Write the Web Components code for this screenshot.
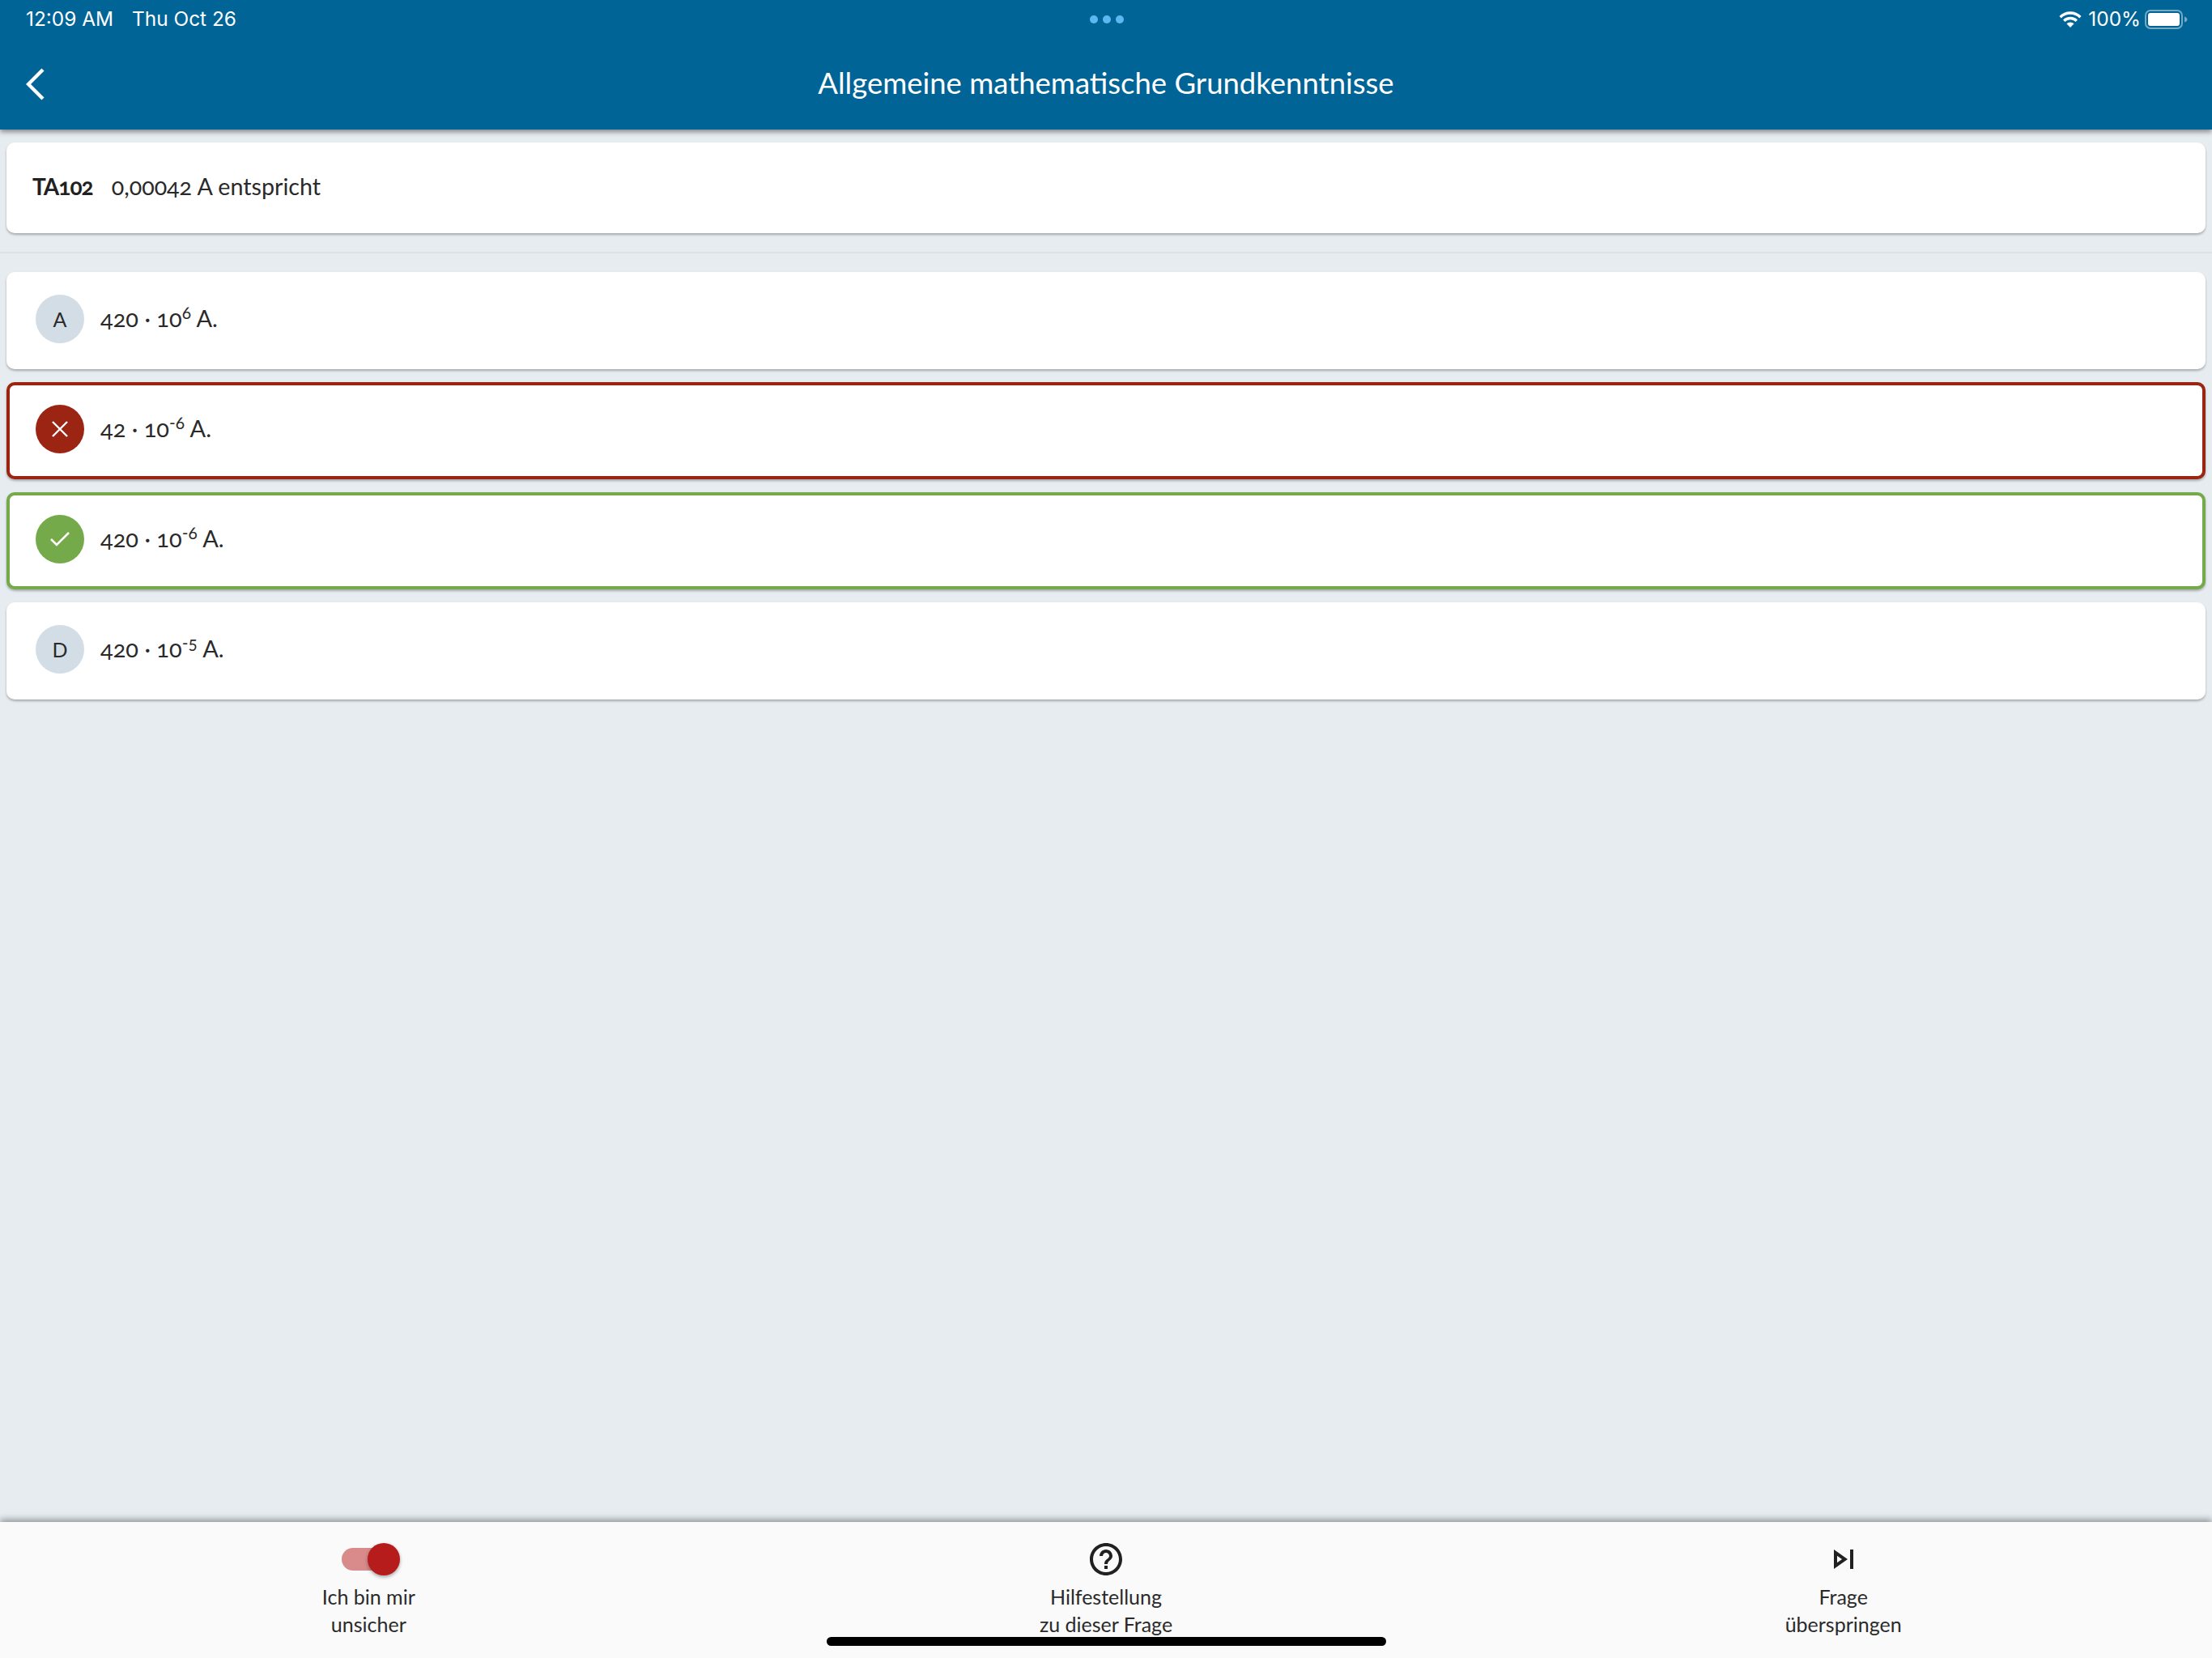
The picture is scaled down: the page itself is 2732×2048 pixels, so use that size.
<!DOCTYPE html>
<html lang="de">
<head>
<meta charset="utf-8">
<title>Frage</title>
<style>
  html, body { margin: 0; height: 100%; }
  body { display: flex; flex-direction: column; height: 2048px; overflow: hidden; background: #e7ecf0; font-family: "Lato", "Liberation Sans", sans-serif; color: #212121; }
  sup { font-size: 0.72em; line-height: 0; vertical-align: 0.5em; }
  main-area { flex: 1; }
</style>
</head>
<body>
<app-header heading="Allgemeine mathematische Grundkenntnisse"></app-header>
<main-area>
  <question-card code="TA102">0,00042 A entspricht</question-card>
  <answer-option letter="A">420 · 10<sup>6</sup> A.</answer-option>
  <answer-option state="wrong">42 · 10<sup>-6</sup> A.</answer-option>
  <answer-option state="right">420 · 10<sup>-6</sup> A.</answer-option>
  <answer-option letter="D">420 · 10<sup>-5</sup> A.</answer-option>
</main-area>
<bottom-bar>
  <bar-action>
    <toggle-switch slot="icon"></toggle-switch>
    Ich bin mir<br>unsicher
  </bar-action>
  <bar-action>
    <svg slot="icon" width="48" height="48" viewBox="0 0 24 24" fill="#212121"><path d="M11 18h2v-2h-2v2zm1-16C6.48 2 2 6.48 2 12s4.48 10 10 10 10-4.48 10-10S17.52 2 12 2zm0 18c-4.41 0-8-3.59-8-8s3.59-8 8-8 8 3.59 8 8-3.59 8-8 8zm0-14c-2.21 0-4 1.79-4 4h2c0-1.1.9-2 2-2s2 .9 2 2c0 2-3 1.75-3 5h2c0-2.25 3-2.5 3-5 0-2.21-1.79-4-4-4z"/></svg>
    Hilfestellung<br>zu dieser Frage
  </bar-action>
  <bar-action>
    <svg slot="icon" width="48" height="48" viewBox="0 0 24 24" fill="#212121"><path fill-rule="evenodd" d="M6 18l8.5-6L6 6v12zm2-8.14L11.03 12 8 14.14V9.86zM16 6h2v12h-2z"/></svg>
    Frage<br>überspringen
  </bar-action>
</bottom-bar>

<script>
class AppHeader extends HTMLElement {
  constructor() {
    super()
    this.shadow = this.attachShadow({ mode: 'open' })
  }
  connectedCallback() {
    this.shadow.innerHTML = /*html*/`
    <style>
      :host { display: block; position: relative; z-index: 2; height: 160px; background: #006496; color: #fff; box-shadow: 0 3px 6px rgba(0,0,0,.42); }
      .status { height: 48px; box-sizing: border-box; padding: 0 30px 0 32px; display: grid; grid-template-columns: 1fr auto 1fr; align-items: center; font: 400 24.4px "Inter", "Liberation Sans", sans-serif; }
      .left { display: flex; gap: 23px; margin-bottom: 2px; }
      .dots { display: flex; gap: 6px; }
      .dots i { width: 10px; height: 10px; border-radius: 50%; background: #5cb8f0; }
      .right { display: flex; align-items: center; justify-content: flex-end; }
      .right span { margin: 0 5px 2px 8px; }
      .nav { height: 112px; display: grid; grid-template-columns: 1fr auto 1fr; align-items: center; padding: 0 32px; }
      .back { display: block; }
      h1 { margin: 0 0 4px; font: 400 36.5px "Lato", "Liberation Sans", sans-serif; white-space: nowrap; }
    </style>
    <div class="status">
      <div class="left"><span>12:09 AM</span><span>Thu Oct 26</span></div>
      <div class="dots"><i></i><i></i><i></i></div>
      <div class="right">
        <svg width="28" height="20" viewBox="0 0 28 20" fill="none" stroke="#fff" stroke-width="3.4"><path d="M1.6 7.2a17.5 17.5 0 0 1 24.8 0"/><path d="M6.2 11.8a11 11 0 0 1 15.6 0"/><path d="M14 20l-4.6-4.7a6.5 6.5 0 0 1 9.2 0z" fill="#fff" stroke="none"/></svg>
        <span>100%</span>
        <svg width="53" height="24" viewBox="0 0 53 24"><rect x="1" y="1" width="45" height="22" rx="6" fill="none" stroke="#fff" stroke-opacity=".45" stroke-width="2"/><rect x="4" y="4" width="39" height="16" rx="3" fill="#fff"/><path d="M49 8.5c2 .5 3.5 2 3.5 3.500s-1.500 3-3.500 3.500z" fill="#fff" fill-opacity=".45"/></svg>
      </div>
    </div>
    <div class="nav">
      <svg class="back" width="24" height="40" viewBox="0 0 24 40" fill="none" stroke="#fff" stroke-width="4.4"><path d="M21 2L3 20l18 18"/></svg>
      <h1>${this.getAttribute('heading')}</h1>
      <span></span>
    </div>`
  }
}
customElements.define('app-header', AppHeader);

class MainArea extends HTMLElement {
  constructor() {
    super()
    this.shadow = this.attachShadow({ mode: 'open' })
  }
  connectedCallback() {
    this.shadow.innerHTML = /*html*/`
    <style>
      :host { display: flex; flex-direction: column; padding: 16px 8px 0; }
      .answers { display: flex; flex-direction: column; gap: 16px; }
      hr { border: 0; height: 2px; background: #dde2e6; margin: 23px -8px; }
    </style>
    <slot name="question"></slot>
    <hr>
    <div class="answers"><slot></slot></div>`
    this.querySelector('question-card').slot = 'question'
  }
}
customElements.define('main-area', MainArea);

class QuestionCard extends HTMLElement {
  constructor() {
    super()
    this.shadow = this.attachShadow({ mode: 'open' })
  }
  connectedCallback() {
    this.shadow.innerHTML = /*html*/`
    <style>
      :host { display: flex; align-items: center; gap: 23px; height: 112px; box-sizing: border-box; padding: 0 32px 4px; background: #fff; border-radius: 10px; box-shadow: 0 2px 3px rgba(0,0,0,.28); font-size: 28.7px; font-variant-numeric: oldstyle-nums; color: #2a2a2a; }
      b { font-weight: 700; font-size: 28px; letter-spacing: -1px; color: #212121; }
    </style>
    <b>${this.getAttribute('code')}</b><span><slot></slot></span>`
  }
}
customElements.define('question-card', QuestionCard);

class AnswerOption extends HTMLElement {
  constructor() {
    super()
    this.shadow = this.attachShadow({ mode: 'open' })
  }
  connectedCallback() {
    const state = this.getAttribute('state')
    let badge = this.getAttribute('letter') || ''
    if (state == 'wrong') badge = '<svg width="20" height="20" viewBox="0 0 20 20" stroke="#fff" stroke-width="2.4"><path d="M1 1l18 18M19 1L1 19"/></svg>'
    if (state == 'right') badge = '<svg width="24" height="18" viewBox="0 0 24 18" fill="none" stroke="#fff" stroke-width="2.6"><path d="M1 9l7 7L23 1"/></svg>'
    this.shadow.innerHTML = /*html*/`
    <style>
      :host { display: flex; align-items: center; gap: 20px; height: 120px; box-sizing: border-box; padding: 0 36px 4px; background: #fff; border-radius: 10px; box-shadow: 0 2px 3px rgba(0,0,0,.28); font-size: 29px; font-variant-numeric: oldstyle-nums; color: #2a2a2a; }
      :host([state="wrong"]), :host([state="right"]) { border: 4px solid; padding: 0 32px 4px; }
      :host([state="wrong"]) { border-color: #9c2412; }
      :host([state="right"]) { border-color: #74aa4a; }
      .badge { width: 60px; height: 60px; flex: none; border-radius: 50%; background: #d2dde6; display: flex; align-items: center; justify-content: center; font-size: 25px; }
      :host([state="wrong"]) .badge { background: #9c2412; }
      :host([state="right"]) .badge { background: #74aa4a; }
      .text { margin-bottom: 3px; }
    </style>
    <div class="badge">${badge}</div><span class="text"><slot></slot></span>`
  }
}
customElements.define('answer-option', AnswerOption);

class BottomBar extends HTMLElement {
  constructor() {
    super()
    this.shadow = this.attachShadow({ mode: 'open' })
  }
  connectedCallback() {
    this.shadow.innerHTML = /*html*/`
    <style>
      :host { display: grid; grid-template-columns: repeat(3, 1fr); position: relative; height: 168px; background: #fafafa; box-shadow: 0 -3px 8px rgba(0,0,0,.38); }
      .home { position: absolute; left: 1021px; top: 142px; width: 691px; height: 11px; border-radius: 6px; background: #000; }
    </style>
    <slot></slot>
    <div class="home"></div>`
  }
}
customElements.define('bottom-bar', BottomBar);

class BarAction extends HTMLElement {
  constructor() {
    super()
    this.shadow = this.attachShadow({ mode: 'open' })
  }
  connectedCallback() {
    this.shadow.innerHTML = /*html*/`
    <style>
      :host { display: flex; flex-direction: column; align-items: center; padding-top: 22px; box-sizing: border-box; text-align: center; font-size: 25px; line-height: 34px; color: #2a2a2a; }
      .icon { height: 48px; display: flex; align-items: center; margin-bottom: 5px; }
    </style>
    <div class="icon"><slot name="icon"></slot></div>
    <div><slot></slot></div>`
  }
}
customElements.define('bar-action', BarAction);

class ToggleSwitch extends HTMLElement {
  constructor() {
    super()
    this.shadow = this.attachShadow({ mode: 'open' })
  }
  connectedCallback() {
    this.shadow.innerHTML = /*html*/`
    <style>
      :host { display: block; position: relative; width: 72px; height: 40px; margin-left: 5px; }
      .track { position: absolute; left: 0; top: 6px; width: 60px; height: 28px; border-radius: 14px; background: #d98b8b; }
      .knob { position: absolute; right: 0; top: 0; width: 40px; height: 40px; border-radius: 50%; background: #b71c1c; box-shadow: 0 2px 4px rgba(0,0,0,.35); }
    </style>
    <div class="track"></div><div class="knob"></div>`
  }
}
customElements.define('toggle-switch', ToggleSwitch);
</script>
</body>
</html>
